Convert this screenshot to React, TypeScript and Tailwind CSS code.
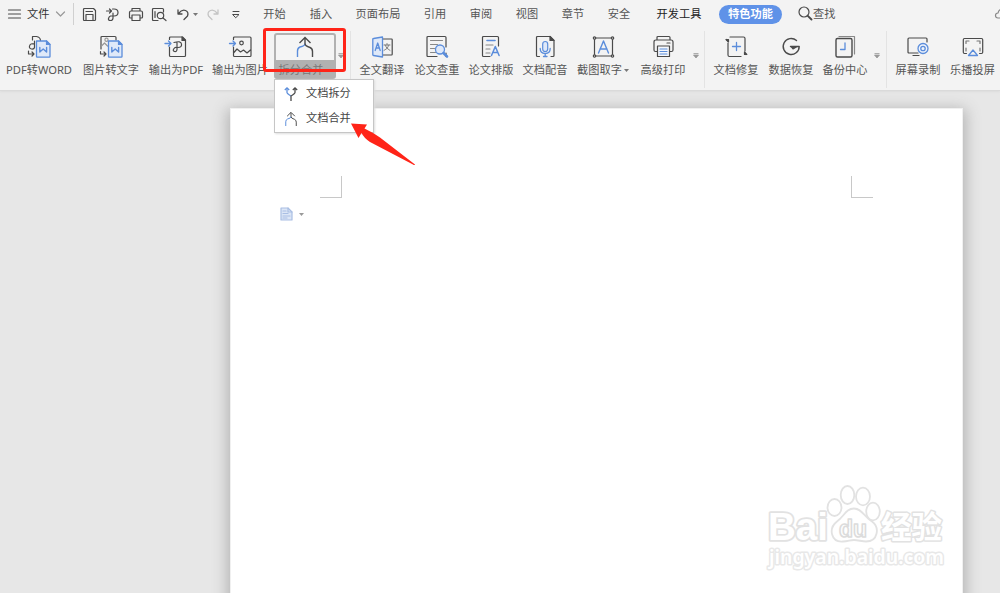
import React from 'react';

const D = '#4a4a4a';
const B = '#5b8ddb';

function Svg({ w = 24, h = 24, children }: { w?: number; h?: number; children: React.ReactNode }) {
  return (
    <svg width={w} height={h} viewBox={`0 0 ${w} ${h}`} fill="none" stroke={D} strokeWidth="1.2" strokeLinecap="round" strokeLinejoin="round" className="block shrink-0 overflow-visible">
      {children}
    </svg>
  );
}

function WordSheet() {
  return (
    <>
      <path d="M9.500 6h10l3.500 3.500v12q0 .7-.7.700H10.200q-.7 0-.7-.7z" fill="#dfe9f9" stroke={B} strokeWidth="1.300" />
      <path d="M19.500 6v3.500H23z" fill={B} stroke={B} />
      <path d="M12.800 12.500v4.500l3.400-3 3.400 3v-4.500" stroke={B} strokeWidth="1.400" />
    </>
  );
}

const icons: Record<string, React.ReactNode> = {
  pdfWord: (<Svg><path d="M5.500 5V1.500h4q3.700.5 4 4M7.500 6v6.500q-.5 2-3 1.500-2.500-.5-2-3t3-2.200h2M1.500 16v3h5.500M5 17l2 2-2 2" /><WordSheet /></Svg>),
  picWord: (<Svg><path d="M2 14V2.500q0-1 1-1h13q1 0 1 1V5M1.500 16.500v2.500h5.500M5 17l2 2-2 2" /><path d="M2.500 11l3-3 3 3" stroke="#999" /><circle cx="7.500" cy="4.800" r="1.600" stroke="#999" /><WordSheet /></Svg>),
  toPdf: (<Svg><path d="M5.500 4.500V3q0-1 1-1h12l3 3v15.500q0 1-1 1h-14q-1 0-1-1V12" /><path d="M18 2v3.500h3.500z" fill={D} /><path d="M10 7.500q7-2 7.500 1.500t-3.500 3.500h-1.500M13 7.500v7q-.3 2.500-2.500 2-2-.7-.8-2.500t2.500-1.500" /><path d="M1 8.500h6M4.500 6L7 8.500 4.500 11" stroke={B} strokeWidth="1.300" /></Svg>),
  toPic: (<Svg><path d="M5.500 4.500V3q0-1 1-1H22q1 0 1 1v17.500q0 1-1 1H6.500q-1 0-1-1V12M5.500 18l3.500-4 3.500 3 3-2 3.500 3 4-3.500" /><circle cx="13.500" cy="8" r="1.800" /><path d="M1.500 8.500h6M5 6l2.500 2.500L5 11" stroke={B} strokeWidth="1.300" /></Svg>),
  translate: (<Svg><path d="M13 4h8.500q.7 0 .7.700v14.600q0 .7-.7.700H13" /><path d="M3.500 3.500L12.500 2v20l-9-1.500q-.7 0-.7-.7V4.200q0-.7.700-.7z" fill="#dfe9f9" stroke={B} strokeWidth="1.300" /><path d="M5.200 15.500l2.500-7.500 2.500 7.500M6 13h3.500" stroke={B} strokeWidth="1.300" /><path d="M14 10h6M17 8.500V10M19 10q-1 4-5 5.500M15 10q1 3.500 5 5.500" stroke="#777" strokeWidth=".9" /></Svg>),
  check: (<Svg><path d="M12 21.500H3q-1 0-1-1v-18q0-1 1-1h17q1 0 1 1V12M21 18v3.500" /><path d="M5.500 5.500h12M5.500 9.500h7M5.500 13.500h4M5.500 17.500h5" stroke="#888" /><circle cx="15" cy="14.500" r="4.500" fill="#dfe9f9" stroke={B} strokeWidth="1.300" /><path d="M18.500 18l3.500 3.500" stroke={B} strokeWidth="2.600" /></Svg>),
  layout: (<Svg><path d="M11 21.500H4.500q-1 0-1-1v-18q0-1 1-1h14q1 0 1 1V11" /><path d="M7 10h7M7 14h4M7 18h4" stroke="#888" /><path d="M8 5.500h8" stroke={B} strokeWidth="1.600" /><path d="M12.500 20.500l3.800-9 3.800 9M13.800 17.500h5" stroke={B} strokeWidth="1.500" /></Svg>),
  voice: (<Svg><path d="M6.500 21.500H4.500q-1 0-1-1v-18q0-1 1-1h12.500l4 4v15q0 1-1 1h-2" /><path d="M17 1.500v4h4z" fill={D} /><rect x="9.700" y="6.500" width="5" height="10" rx="2.500" fill="#dfe9f9" stroke={B} /><path d="M7.200 13.500q0 5 5 5t5-5M12.200 18.500V21.500M10.500 21.500h3.500" stroke={B} strokeWidth="1.300" /></Svg>),
  capture: (<Svg><path d="M3.500 3h18v18h-18z" />{[[3.5, 3], [21.5, 3], [3.5, 21], [21.5, 21]].map(([x, y]) => <circle key={`${x}-${y}`} cx={x} cy={y} r="1.200" fill="#f3f3f3" />)}<path d="M7.500 18L12.500 6l5 12M9 14h7" stroke={B} strokeWidth="1.400" /></Svg>),
  print: (<Svg><path d="M6 5V2.500q0-1 1-1h11q1 0 1 1V5M6 16.500H4.500q-1.500 0-1.500-1.500V7q0-2 2-2h15q2 0 2 2v8q0 1.500-1.500 1.500H19M16 8h3" /><path d="M6.500 11h12v10.500h-12z" fill="#f6f8fc" /><path d="M9 14h7M9 16.500h7M9 19h7" stroke={B} /></Svg>),
  repair: (<Svg><path d="M4 8v12q0 1.500 1.500 1.500H17M6 2h13.500q1.500 0 1.500 1.500V16M4 6L2.500 4.500M21 18l1 1.500" /><path d="M2 4.500h2.500V7zM20.500 17v2.500h2.300z" fill={D} /><path d="M12.500 7.500v8M8.500 11.500h8" stroke={B} strokeWidth="1.300" /></Svg>),
  recover: (<Svg><path d="M17.500 5.500a8 8 0 1 0 2.700 6H11.500" strokeWidth="1.400" /><path d="M12 11.500h6l-4 2.500z" fill={D} /></Svg>),
  backup: (<Svg><path d="M6 1.500h15.500V19" stroke="#888" /><rect x="3" y="3.500" width="16" height="18.500" rx="1.500" strokeWidth="1.400" /><path d="M12 8v6.500H7.500" stroke={B} strokeWidth="1.300" /></Svg>),
  record: (<Svg><path d="M12 18H3q-1 0-1-1V4q0-1 1-1h17q1 0 1 1v3M7 20.500h6" /><circle cx="17" cy="13.500" r="5" fill="#f0f4fb" stroke={B} strokeWidth="1.300" /><circle cx="17" cy="13.500" r="2.200" stroke={B} strokeWidth="1.300" /></Svg>),
  cast: (<Svg><path d="M5.500 18.500H3.500q-1.200 0-1.200-1.200V4.700q0-1.200 1.200-1.200h17q1.200 0 1.200 1.200v12.600q0 1.200-1.200 1.200H18.500" /><path d="M5 8.500V6h3M16 6h3v2.500M5 13v3M19 13v3" stroke="#777" /><path d="M12 15l4.500 5.500h-9z" stroke={B} strokeWidth="1.300" /></Svg>),
};

function Merge({ w, h }: { w: number; h: number }) {
  return (
    <svg width={w} height={h} viewBox="0 0 20 22" fill="none" stroke={D} strokeWidth="1.400" className="block">
      <path d="M2.500 21v-6q0-3 2.500-4 5-1 5-3.500" stroke={B} />
      <path d="M10 2v5.500q0 2.500 5 4 2.500 1 2.500 4V21M4.500 7L10 1.500 15.500 7" />
    </svg>
  );
}

function Split() {
  return (
    <svg width="14" height="16" viewBox="0 0 14 16" fill="none" stroke={D} strokeWidth="1.300" className="block">
      <path d="M3 2v4.500q0 1 4 3.500" stroke={B} />
      <path d="M.8 4L3 1.800 5.200 4" stroke={B} />
      <path d="M11 2v4.500q0 1-4 3.500v5M8.800 4L11 1.800 13.200 4" />
    </svg>
  );
}

function Caret({ light }: { light?: boolean }) {
  return <svg width="5" height="3" viewBox="0 0 5 3" className="shrink-0"><path d="M0 0h5L2.500 3z" fill={light ? '#999' : '#777'} /></svg>;
}

function Tool({ width, icon, label, caret }: { width: string; icon: string; label: string; caret?: boolean }) {
  return (
    <div className={`${width} flex h-full shrink-0 flex-col items-center pt-[7px]`}>
      {icons[icon]}
      <div className="mt-[3px] flex h-4 items-center gap-[2px] whitespace-nowrap text-[11.2px] leading-4">
        <span>{label}</span>{caret && <Caret />}
      </div>
    </div>
  );
}

function More({ className }: { className: string }) {
  return (
    <div className={`${className} flex h-full shrink-0 justify-center pt-[25px]`}>
      <svg width="6" height="6" viewBox="0 0 6 6" className="shrink-0"><path d="M.5 .5h5M.5 2h5L3 5z" stroke="#999" strokeWidth=".8" fill="#999" /></svg>
    </div>
  );
}

function Rule({ className }: { className: string }) {
  return <div className={`${className} mt-[3px] h-[57px] w-px shrink-0 bg-[#e3e3e3]`} />;
}

function Tab({ width, children, dark }: { width: string; children: string; dark?: boolean }) {
  return <div className={`${width} shrink-0 text-center ${dark ? 'text-[#222]' : ''}`}>{children}</div>;
}

function TopBar() {
  return (
    <div className="flex h-7 items-center overflow-hidden whitespace-nowrap text-[11.2px]">
      <div className="flex w-[73px] shrink-0 items-center pl-2">
        <Svg w={13} h={10}><path d="M.5 1h12M.5 5h12M.5 9h12" /></Svg>
        <span className="ml-[6px] text-[#333]">文件</span>
        <span className="ml-[7px]"><Svg w={9} h={6}><path d="M.5 1l4 4 4-4" stroke="#999" /></Svg></span>
      </div>
      <div className="h-[22px] w-px shrink-0 bg-[#d0d0d0]" />
      <div className="flex w-[175px] shrink-0 items-center pl-[9px]">
        <Svg w={13} h={13}><path d="M1.500.5h9l2 2v9q0 1-1 1h-10q-1 0-1-1v-10q0-1 1-1zM3 12V6.500h7V12M3 3.500h6.500" /></Svg>
        <span className="ml-[10px]"><Svg w={13} h={13}><path d="M.5 3h5M3.500 1l2 2-2 2M6.500 1h1.500q4 0 4 3.500T8 8H5M7 5v5q0 2.500-2.500 2.500T2.500 10.500 4.500 8h1" /></Svg></span>
        <span className="ml-[10px]"><Svg w={14} h={13}><path d="M3 3V.5h8V3M3 10H1.500q-1 0-1-1V4.500Q.5 3 2 3h10q1.500 0 1.500 1.500V9q0 1-1 1H11M3 7h8v5.500H3z" /></Svg></span>
        <span className="ml-[9px]"><Svg w={15} h={13}><path d="M6 12.500H1.500q-1 0-1-1v-10q0-1 1-1h9q1 0 1 1V4M3 3.500v6" /><circle cx="8.500" cy="7.500" r="3.200" /><path d="M11 10l3 2.500" /></Svg></span>
        <span className="ml-[10px]"><Svg w={12} h={12}><path d="M1 2v4h4M1.500 5.500Q5 1 8.500 2.500t2 5.500L7 11.500" strokeWidth="1.300" /></Svg></span>
        <span className="ml-[4px]"><Caret /></span>
        <span className="ml-[9px]"><Svg w={12} h={12}><path d="M11 2v4H7M10.500 5.500Q7 1 3.500 2.500t-2 5.500L5 11.500" stroke="#c4c4c4" strokeWidth="1.300" /></Svg></span>
        <span className="ml-[13px]"><Svg w={8} h={7}><path d="M1 .5h6M1 3.500h6L4 6.500z" strokeWidth="1" /></Svg></span>
      </div>
      <Tab width="w-[51px]">开始</Tab>
      <Tab width="w-[42px]">插入</Tab>
      <Tab width="w-[72px]">页面布局</Tab>
      <Tab width="w-[42px]">引用</Tab>
      <Tab width="w-[50px]">审阅</Tab>
      <Tab width="w-[42px]">视图</Tab>
      <Tab width="w-[50px]">章节</Tab>
      <Tab width="w-[42px]">安全</Tab>
      <Tab width="w-[78px]" dark>开发工具</Tab>
      <div className="ml-px flex h-[19px] w-[63px] shrink-0 items-center justify-center rounded-full bg-[#5f92e8] font-bold text-white">特色功能</div>
      <div className="ml-4 flex shrink-0 items-center">
        <Svg w={15} h={15}><circle cx="6" cy="6" r="5" strokeWidth="1.200" /><path d="M9.800 9.800l3.700 3.700" strokeWidth="1.900" /></Svg>
        <span>查找</span>
      </div>
      <span className="ml-[160px]"><Svg w={16} h={12}><path d="M5 10H3Q.5 10 .5 7.500T3 5q1-4 5-4" stroke="#888" /></Svg></span>
    </div>
  );
}

function Ribbon() {
  return (
    <div className="flex h-[62px] items-start overflow-hidden">
      <Tool width="w-[78px]" icon="pdfWord" label="PDF转WORD" />
      <Tool width="w-[66px]" icon="picWord" label="图片转文字" />
      <Tool width="w-[64px]" icon="toPdf" label="输出为PDF" />
      <Tool width="w-[64px]" icon="toPic" label="输出为图片" />
      <div className="ml-[2px] mt-[5px] flex h-[46px] w-[62px] shrink-0 flex-col overflow-hidden rounded-[3px] border-2 border-[#b1b1b1] bg-[#b1b1b1]">
        <div className="flex h-[25px] shrink-0 justify-center bg-[#f4f4f4] pt-[1px]"><Merge w={20} h={22} /></div>
        <div className="flex h-[20px] shrink-0 items-center justify-center gap-[3px] whitespace-nowrap text-[11.2px] text-[#777]">拆分合并<Caret /></div>
      </div>
      <More className="w-[10px]" />
      <Rule className="ml-[4px]" />
      <Tool width="ml-[4px] w-[54px]" icon="translate" label="全文翻译" />
      <Tool width="w-[56px]" icon="check" label="论文查重" />
      <Tool width="w-[52px]" icon="layout" label="论文排版" />
      <Tool width="w-[56px]" icon="voice" label="文档配音" />
      <Tool width="w-[60px]" icon="capture" label="截图取字" caret />
      <Tool width="w-[60px]" icon="print" label="高级打印" />
      <More className="w-[6px]" />
      <Rule className="ml-[5px]" />
      <Tool width="ml-[4px] w-[54px]" icon="repair" label="文档修复" />
      <Tool width="w-[56px]" icon="recover" label="数据恢复" />
      <Tool width="w-[52px]" icon="backup" label="备份中心" />
      <More className="ml-[1px] w-[10px]" />
      <Rule className="ml-[4px]" />
      <Tool width="ml-[4px] w-[54px]" icon="record" label="屏幕录制" />
      <Tool width="w-[55px]" icon="cast" label="乐播投屏" />
    </div>
  );
}

function Watermark() {
  return (
    <svg width="200" height="100" viewBox="0 0 200 100" fill="white" stroke="#e2e2e2" strokeWidth="1.800" strokeLinejoin="round" className="absolute left-[760px] top-[480px]" style={{ fontFamily: '"Liberation Sans", "Noto Sans CJK SC", sans-serif' }}>
      <ellipse cx="74.500" cy="27.500" rx="7" ry="8.500" />
      <ellipse cx="87.500" cy="15" rx="6.800" ry="9" />
      <ellipse cx="103" cy="16.500" rx="7" ry="8.800" />
      <ellipse cx="113" cy="31.500" rx="6.800" ry="8.800" />
      <path d="M94 28.500c-8 0-10 8-17 13-9 7-6 21 6 20 5 0 7-1.500 11-1.500s8 1.500 12 1.500c12 0 14-14 6-20-8-5-10-13-18-13z" />
      <text x="8" y="60" fontSize="39" fontWeight="700" textLength="60" lengthAdjust="spacingAndGlyphs" paintOrder="stroke" strokeWidth="3.600">Bai</text>
      <text x="79" y="57" fontSize="23" fontWeight="700" textLength="28" lengthAdjust="spacingAndGlyphs" stroke="#dcdcdc" strokeWidth="1.600">du</text>
      <text x="121" y="58" fontSize="31" fontWeight="700" textLength="61" lengthAdjust="spacingAndGlyphs" paintOrder="stroke" strokeWidth="3">经验</text>
      <text x="9" y="84" fontSize="20" fontWeight="600" textLength="175" lengthAdjust="spacingAndGlyphs" paintOrder="stroke" stroke="#e8e8e8" strokeWidth="3" style={{ fontFamily: '"Noto Sans", sans-serif' }}>jingyan.baidu.com</text>
    </svg>
  );
}

export default function App() {
  return (
    <div className="relative flex h-[593px] w-[1000px] flex-col overflow-hidden bg-[#e7e7e7] text-[#555]" style={{ fontFamily: '"Noto Sans", "Noto Sans CJK SC", sans-serif' }}>
      <header className="h-[91px] shrink-0 border-b border-[#dadada] bg-[#f3f3f3] shadow-[0_1px_2px_#dcdcdc]">
        <TopBar />
        <Ribbon />
      </header>
      <main className="ml-[230px] mt-[17px] h-[500px] w-[733px] shrink-0 border border-[#f0f0f0] bg-white shadow-[0_4px_14px_3px_#b4b4b4]">
        <div className="flex justify-between pl-[89px] pr-[89px] pt-[67px]">
          <div className="h-[22px] w-[22px] border-b border-r border-[#c8c8c8]" />
          <div className="h-[22px] w-[22px] border-b border-l border-[#c8c8c8]" />
        </div>
        <div className="ml-[49px] mt-[9px] flex items-center gap-[6px]">
          <Svg w={13} h={14}><path d="M1 1h7l4 4v8H1z" fill="#dce6f6" stroke="#a9bee3" /><path d="M8 1v4h4M3 4h3M3 6.500h5M3 9h7M3 11h4" stroke="#a9bee3" /></Svg>
          <Caret light />
        </div>
      </main>
      <Watermark />
      <div className="absolute left-[274px] top-[79px] flex h-[54px] w-[100px] flex-col border border-[#c6c6c6] bg-white pt-[1px] text-[11.2px] text-[#444] shadow-[1px_1px_2px_#ddd]">
        <div className="flex h-[25px] items-center pl-[9px]"><Split /><span className="ml-2">文档拆分</span></div>
        <div className="flex h-[25px] items-center pl-[9px]"><Merge w={14} h={16} /><span className="ml-2">文档合并</span></div>
      </div>
      <div className="absolute left-[263px] top-[28px] h-[44px] w-[83px] rounded-[3px] border-[3px] border-[#ff2418]" />
      <svg width="66" height="44" viewBox="0 0 66 44" className="absolute left-[350px] top-[122px]"><path d="M1 1.500L17 2.500 14.500 6.500Q22 10 30 15.500L65 42.500q-.5 1-2 0L20 20Q14 16 11.500 11L8.500 16z" fill="#ff2418" /></svg>
    </div>
  );
}
